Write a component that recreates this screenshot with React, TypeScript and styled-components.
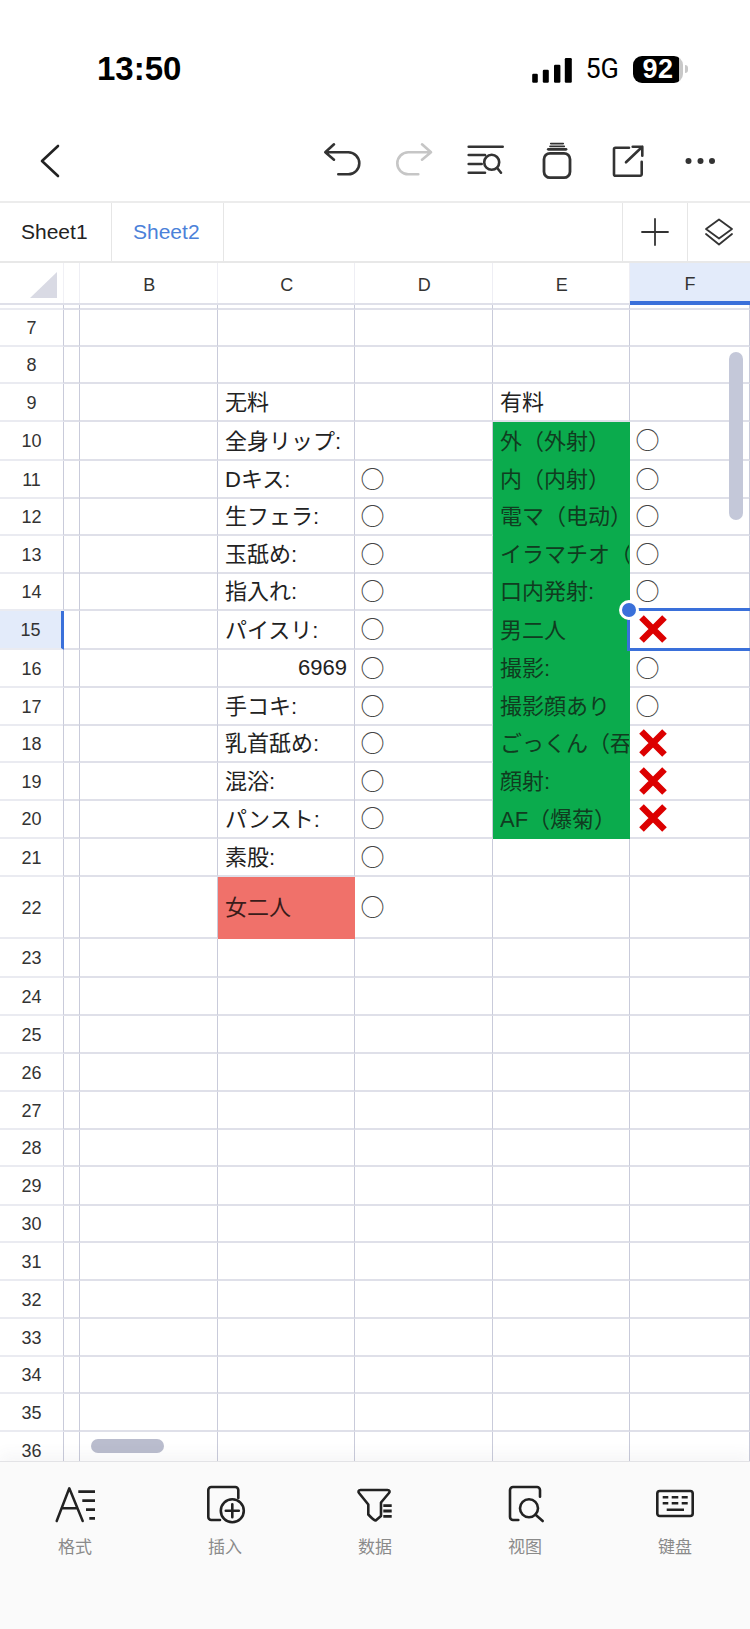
import React from 'react'
import styled, { createGlobalStyle } from 'styled-components'

const CJK = `"Liberation Sans", "Noto Sans CJK JP", sans-serif`
const BLUE = '#3a70da'
const V_LINE = '#c9cbda'
const H_LINE = '#dfe0e9'

const GlobalStyle = createGlobalStyle`
  html, body {
    margin: 0;
    padding: 0;
    background: #fff;
  }
`

type Mark = 'o' | 'x'

type RowType = {
  n: number,
  h: number,
  c?: string,
  d?: Mark,
  e?: string,
  f?: Mark,
  number?: boolean,
  red?: boolean,
  selected?: boolean
}

const ROWS: RowType[] = [
  { n: 7, h: 37 },
  { n: 8, h: 37 },
  { n: 9, h: 38, c: '无料', e: '有料' },
  { n: 10, h: 39, c: '全身リップ:', e: '外（外射）', f: 'o' },
  { n: 11, h: 37, c: 'Dキス:', d: 'o', e: '内（内射）', f: 'o' },
  { n: 12, h: 38, c: '生フェラ:', d: 'o', e: '電マ（电动）', f: 'o' },
  { n: 13, h: 37, c: '玉舐め:', d: 'o', e: 'イラマチオ（深喉）', f: 'o' },
  { n: 14, h: 38, c: '指入れ:', d: 'o', e: '口内発射:', f: 'o' },
  { n: 15, h: 39, c: 'パイスリ:', d: 'o', e: '男二人', f: 'x', selected: true },
  { n: 16, h: 38, c: '6969', number: true, d: 'o', e: '撮影:', f: 'o' },
  { n: 17, h: 37, c: '手コキ:', d: 'o', e: '撮影顔あり', f: 'o' },
  { n: 18, h: 38, c: '乳首舐め:', d: 'o', e: 'ごっくん（吞精）', f: 'x' },
  { n: 19, h: 37, c: '混浴:', d: 'o', e: '顔射:', f: 'x' },
  { n: 20, h: 39, c: 'パンスト:', d: 'o', e: 'AF（爆菊）', f: 'x' },
  { n: 21, h: 38, c: '素股:', d: 'o' },
  { n: 22, h: 62, c: '女二人', d: 'o', red: true },
  { n: 23, h: 39 },
  { n: 24, h: 38 },
  { n: 25, h: 38 },
  { n: 26, h: 38 },
  { n: 27, h: 38 },
  { n: 28, h: 37 },
  { n: 29, h: 39 },
  { n: 30, h: 37 },
  { n: 31, h: 38 },
  { n: 32, h: 38 },
  { n: 33, h: 38 },
  { n: 34, h: 37 },
  { n: 35, h: 38 },
  { n: 36, h: 38 }
]

const Page = styled.div`
  width: 750px;
  height: 1629px;
  display: flex;
  flex-direction: column;
  overflow: hidden;
  background: #fff;
  font-family: ${CJK};
`

const StatusBar = styled.div`
  height: 120px;
  flex: none;
  box-sizing: border-box;
  padding: 50px 62px 0 97px;
  display: flex;
  justify-content: space-between;
  align-items: flex-start;
  color: #000;
`

const Clock = styled.div`
  font-size: 33px;
  font-weight: 700;
  line-height: 38px;
`

const StatusRight = styled.div`
  display: flex;
  align-items: center;
  height: 38px;
`

const NetworkLabel = styled.span`
  font-family: Roboto, sans-serif;
  font-size: 27px;
  font-weight: 400;
  margin: 0 14px 0 13px;
`

const Battery = styled.div<{ $level: number }>`
  width: 50px;
  height: 27px;
  border-radius: 9px;
  background: linear-gradient(90deg, #000 ${p => p.$level}%, #c8c8c8 ${p => p.$level}%);
  color: #fff;
  font-size: 27px;
  font-weight: 700;
  line-height: 27px;
  text-align: center;
  letter-spacing: 0.5px;
`

const BatteryNub = styled.div`
  width: 3px;
  height: 8px;
  margin-left: 2px;
  border-radius: 0 3px 3px 0;
  background: #c8c8c8;
`

const Toolbar = styled.div`
  height: 81px;
  flex: none;
  box-sizing: border-box;
  padding: 0 12px 2px 30px;
  display: flex;
  align-items: center;
  justify-content: space-between;
`

const ToolGroup = styled.div`
  display: flex;
`

const ToolButton = styled.div`
  width: 72px;
  height: 40px;
  display: flex;
  justify-content: center;
`

const Tabs = styled.div`
  height: 62px;
  flex: none;
  box-sizing: border-box;
  display: flex;
  border-top: 2px solid #ececec;
  border-bottom: 2px solid #e8e8e8;
`

const Tab = styled.div<{ $active?: boolean }>`
  width: 112px;
  box-sizing: border-box;
  padding-left: 21px;
  display: flex;
  align-items: center;
  border-right: 1px solid #e6e6e6;
  font-size: 21px;
  color: ${p => (p.$active ? '#4b81d9' : '#222')};
`

const TabSpacer = styled.div`
  flex: 1;
`

const TabButton = styled.div<{ $width: number }>`
  width: ${p => p.$width}px;
  box-sizing: border-box;
  display: flex;
  align-items: center;
  justify-content: center;
  border-left: 1px solid #e6e6e6;
`

const COLUMNS = '64px 16px 137.5px 137.5px 137.5px 137.5px 1fr'

const Sheet = styled.div`
  flex: 1;
  min-height: 0;
  position: relative;
  overflow: hidden;
`

const ColumnHeader = styled.div`
  height: 42px;
  box-sizing: border-box;
  display: grid;
  grid-template-columns: ${COLUMNS};
  border-bottom: 2px solid ${H_LINE};
`

const Corner = styled.div`
  display: flex;
  align-items: flex-start;
  padding: 9px 0 0 30px;
  border-right: 1px solid #f0f0f5;
`

const ColumnLabel = styled.div<{ $active?: boolean }>`
  margin-bottom: ${p => (p.$active ? '-2px' : '0')};
  padding: ${p => (p.$active ? '4px 0 0 0' : '4px 0 0 2px')};
  display: flex;
  align-items: center;
  justify-content: center;
  box-sizing: border-box;
  font-size: 18px;
  color: #333;
  background: ${p => (p.$active ? '#e3ebfa' : 'transparent')};
  border-bottom: ${p => (p.$active ? `4px solid ${BLUE}` : '0')};
  border-right: ${p => (p.$active ? '0' : '1px solid #eeeef4')};
`

const Row = styled.div<{ $height: number }>`
  height: ${p => p.$height}px;
  display: grid;
  grid-template-columns: ${COLUMNS};
`

const RowLabel = styled.div<{ $active?: boolean }>`
  box-sizing: border-box;
  display: flex;
  align-items: center;
  justify-content: center;
  padding-top: 2px;
  font-size: 18px;
  color: #333;
  background: ${p => (p.$active ? '#e3ebfa' : 'transparent')};
  border-bottom: 2px solid #eaebf1;
  border-right: ${p => (p.$active ? `3px solid ${BLUE}` : `1px solid ${V_LINE}`)};
`

const Cell = styled.div<{ $fill?: string, $align?: string }>`
  position: relative;
  box-sizing: border-box;
  min-width: 0;
  padding-left: 7.5px;
  display: flex;
  align-items: center;
  justify-content: ${p => p.$align || 'flex-start'};
  font-size: 22px;
  color: ${p => (p.$fill === '#0bab4d' ? '#103c20' : p.$fill ? '#3a1c1a' : '#222')};
  background: ${p => p.$fill || 'transparent'};
  border-right: 1px solid ${p => p.$fill || V_LINE};
  border-bottom: 2px solid ${p => p.$fill || H_LINE};
`

const CellText = styled.span<{ $number?: boolean }>`
  white-space: nowrap;
  overflow: hidden;
  padding-right: ${p => (p.$number ? '7px' : '0')};
  margin-bottom: ${p => (p.$number ? '0' : '4px')};
`

const Ring = styled.span`
  font-family: "Noto Sans CJK JP", sans-serif;
  font-size: 24px;
  line-height: 24px;
  color: #444;
  margin: 0 0 3px -2px;
`

const Cross = styled.svg`
  width: 28px;
  height: 28px;
  flex: none;
  margin: 0 0 1px 1px;
`

const SelectionFrame = styled.div`
  position: absolute;
  z-index: 2;
  top: -3px;
  left: -3px;
  right: -10px;
  bottom: -3px;
  border: 3px solid ${BLUE};
`

const SelectionHandle = styled.div`
  position: absolute;
  top: -11px;
  left: -11px;
  width: 14px;
  height: 14px;
  border-radius: 50%;
  background: ${BLUE};
  border: 3px solid #fff;
`

const VerticalThumb = styled.div`
  position: absolute;
  top: 89px;
  right: 7px;
  width: 14px;
  height: 168px;
  border-radius: 7px;
  background: #c4c8d9;
`

const HorizontalThumb = styled.div`
  position: absolute;
  left: 91px;
  bottom: 8px;
  width: 73px;
  height: 14px;
  border-radius: 7px;
  background: #babdce;
`

const Footer = styled.div`
  height: 168px;
  flex: none;
  box-sizing: border-box;
  position: relative;
  z-index: 3;
  padding-top: 21px;
  display: grid;
  grid-template-columns: repeat(5, 150px);
  align-items: start;
  background: #fafafa;
  border-top: 1px solid #e3e3e6;
  box-shadow: 0 -7px 14px rgba(70, 70, 90, 0.05);
`

const FooterItem = styled.div`
  display: flex;
  flex-direction: column;
  align-items: center;
`

const FooterLabel = styled.span`
  margin-top: 7px;
  font-family: "Noto Sans CJK SC", sans-serif;
  font-size: 17px;
  line-height: 24px;
  color: #8a8a8a;
`

const Icon = styled.svg.attrs({ fill: 'none', strokeLinecap: 'round', strokeLinejoin: 'round' })<{ $size: number }>`
  width: ${p => p.$size}px;
  height: ${p => p.$size}px;
  display: block;
  flex: none;
`

const SignalIcon = styled.svg`
  margin-top: 4px;
`

function SignalBars() {
  return (
    <SignalIcon width="40" height="26" viewBox="0 0 40 26">
      <rect x="0.2" y="15.7" width="5.6" height="9" rx="1.2" fill="#000" />
      <rect x="10.8" y="11.7" width="6" height="13" rx="1.2" fill="#000" />
      <rect x="22" y="6.7" width="6.4" height="18" rx="1.2" fill="#000" />
      <rect x="32.8" y="0" width="7" height="24.7" rx="1.2" fill="#000" />
    </SignalIcon>
  )
}

function ToolbarIcons() {
  return (
    <ToolGroup>
      <ToolButton>
        <Icon $size={40} viewBox="0 0 40 40" stroke="#333" strokeWidth="2.6">
          <path d="M12 4.3 3.3 12.3 12 19.7M3.3 12.3H26.3a11 11 0 0 1 0 22H16.3" />
        </Icon>
      </ToolButton>
      <ToolButton>
        <Icon $size={40} viewBox="0 0 40 40" stroke="#c6c6c6" strokeWidth="2.6">
          <path d="M28 4.3 37 12.3 28 19.7M37 12.3H14.3a11 11 0 0 0 0 22H24.3" />
        </Icon>
      </ToolButton>
      <ToolButton>
        <Icon $size={40} viewBox="0 0 40 40" stroke="#333" strokeWidth="2.6">
          <path d="M2.7 6.7H36.7M2.7 15H19M2.7 24H15.7M2.7 32.7H19M31.2 28 35 32.7" />
          <circle cx="25.7" cy="22.3" r="7.5" />
        </Icon>
      </ToolButton>
      <ToolButton>
        <Icon $size={40} viewBox="0 0 40 40" stroke="#333" strokeWidth="2.8">
          <rect x="6" y="13.3" width="26" height="24.4" rx="6" />
          <path d="M10.3 9.3H28" />
          <path d="M12 6.4H26.3M12.7 3.6H25.3" strokeWidth="1.6" />
        </Icon>
      </ToolButton>
      <ToolButton>
        <Icon $size={40} viewBox="0 0 40 40" stroke="#333" strokeWidth="2.6">
          <path d="M19 7.7H5.5A1.5 1.5 0 0 0 4 9.2V34.2A1.5 1.5 0 0 0 5.5 35.7H30.2A1.5 1.5 0 0 0 31.7 34.2V21.7" />
          <path d="M16 22.3 32.3 6.7M22.7 6.7H32.3V15.7" />
        </Icon>
      </ToolButton>
      <ToolButton>
        <Icon $size={40} viewBox="0 0 40 40">
          <circle cx="6.5" cy="21" r="3" fill="#333" />
          <circle cx="18.5" cy="21" r="3" fill="#333" />
          <circle cx="30" cy="21" r="3" fill="#333" />
        </Icon>
      </ToolButton>
    </ToolGroup>
  )
}

function FooterIcon({ name }: { name: string }) {
  if (name === '格式') {
    return (
      <Icon $size={44} viewBox="0 0 44 44" stroke="#222" strokeWidth="2.5">
        <path d="M3.7 38 16.3 5.3 29.7 38M9.7 25.3H23.7" />
        <path d="M25.3 8.7H42M29.3 17.7H42M33 26.7H42M36.3 35.3H42" strokeWidth="2.8" strokeLinecap="butt" />
      </Icon>
    )
  }
  if (name === '插入') {
    return (
      <Icon $size={44} viewBox="0 0 44 44" stroke="#222" strokeWidth="2.6">
        <path d="M17 37H8.3A3 3 0 0 1 5.3 34V7A3 3 0 0 1 8.3 4H32.3A3 3 0 0 1 35.3 7V15" />
        <circle cx="29.3" cy="27.7" r="11.5" />
        <path d="M29.3 21.2V34.2M22.8 27.7H35.8" />
      </Icon>
    )
  }
  if (name === '数据') {
    return (
      <Icon $size={44} viewBox="0 0 44 44" stroke="#222" strokeWidth="2.6">
        <path d="M7.5 7H34.5C36.6 7 37.2 8.6 36 10L28 19.5V33L22.7 37.5C21 37.5 19 35.5 15.3 31.5V21.5L6 10C4.9 8.6 5.5 7 7.5 7Z" />
        <path d="M30.3 22.7H38.7M30.3 28H38.7M30.3 33.3H38.7" strokeWidth="2.8" strokeLinecap="butt" />
      </Icon>
    )
  }
  if (name === '视图') {
    return (
      <Icon $size={44} viewBox="0 0 44 44" stroke="#222" strokeWidth="2.6">
        <path d="M15.3 37H10A3 3 0 0 1 7 34V7A3 3 0 0 1 10 4H34A3 3 0 0 1 37 7V13.7" />
        <circle cx="26" cy="25.3" r="9" />
        <path d="M32.3 31.6 39.7 38" />
      </Icon>
    )
  }
  return (
    <Icon $size={44} viewBox="0 0 44 44" stroke="#222" strokeWidth="2.6">
      <rect x="4.3" y="8" width="35.4" height="25" rx="2.5" />
      <path d="M9.7 14.3H15.3M18.7 14.3H25.3M28.7 14.3H34.7M9.7 20.3H15.3M18.7 20.3H25.3M28.7 20.3H34.7M13.7 26.7H31" strokeLinecap="butt" />
    </Icon>
  )
}

function CellMark({ mark }: { mark?: Mark }) {
  if (mark === 'o') return <Ring>○</Ring>
  if (mark === 'x') {
    return (
      <Cross viewBox="0 0 28 28">
        <path d="M2.5 2.5 25.5 25.5M25.5 2.5 2.5 25.5" stroke="#dc0000" strokeWidth="6.5" fill="none" />
      </Cross>
    )
  }
  return null
}

function SheetRow({ row }: { row: RowType }) {
  const green = row.n >= 10 && row.n <= 20
  return (
    <Row $height={row.h}>
      <RowLabel $active={row.selected}>{row.n}</RowLabel>
      <Cell />
      <Cell />
      <Cell $fill={row.red ? '#f0716a' : undefined} $align={row.number ? 'flex-end' : undefined}>
        {row.c && <CellText $number={row.number}>{row.c}</CellText>}
      </Cell>
      <Cell><CellMark mark={row.d} /></Cell>
      <Cell $fill={green ? '#0bab4d' : undefined}>
        {row.e && <CellText>{row.e}</CellText>}
      </Cell>
      <Cell>
        <CellMark mark={row.f} />
        {row.selected && (
          <SelectionFrame>
            <SelectionHandle />
          </SelectionFrame>
        )}
      </Cell>
    </Row>
  )
}

export default function App() {
  return (
    <Page>
      <GlobalStyle />
      <StatusBar>
        <Clock>13:50</Clock>
        <StatusRight>
          <SignalBars />
          <NetworkLabel>5G</NetworkLabel>
          <Battery $level={92}>92</Battery>
          <BatteryNub />
        </StatusRight>
      </StatusBar>
      <Toolbar>
        <Icon $size={40} viewBox="0 0 40 40" stroke="#222" strokeWidth="2.6">
          <path d="M28 6 12 21 28 36" />
        </Icon>
        <ToolbarIcons />
      </Toolbar>
      <Tabs>
        <Tab>Sheet1</Tab>
        <Tab $active>Sheet2</Tab>
        <TabSpacer />
        <TabButton $width={65}>
          <Icon $size={30} viewBox="0 0 30 30" stroke="#333" strokeWidth="1.8">
            <path d="M15 2V28M2 15H28" />
          </Icon>
        </TabButton>
        <TabButton $width={63}>
          <Icon $size={30} viewBox="0 0 30 30" stroke="#333" strokeWidth="1.8">
            <path d="M15 2.5 28 12 15 21.5 2 12Z" />
            <path d="M2 17 15 27.5 28 17" />
          </Icon>
        </TabButton>
      </Tabs>
      <Sheet>
        <ColumnHeader>
          <Corner>
            <svg width="27" height="26" viewBox="0 0 27 26">
              <path d="M27 0V26H0Z" fill="#d9dae4" />
            </svg>
          </Corner>
          <ColumnLabel />
          {['B', 'C', 'D', 'E'].map(letter => (
            <ColumnLabel key={letter}>{letter}</ColumnLabel>
          ))}
          <ColumnLabel $active>F</ColumnLabel>
        </ColumnHeader>
        <Row $height={5}>
          <RowLabel />
          <Cell /><Cell /><Cell /><Cell /><Cell /><Cell />
        </Row>
        {ROWS.map(row => (
          <SheetRow row={row} key={row.n} />
        ))}
        <VerticalThumb />
        <HorizontalThumb />
      </Sheet>
      <Footer>
        {['格式', '插入', '数据', '视图', '键盘'].map(name => (
          <FooterItem key={name}>
            <FooterIcon name={name} />
            <FooterLabel>{name}</FooterLabel>
          </FooterItem>
        ))}
      </Footer>
    </Page>
  )
}
